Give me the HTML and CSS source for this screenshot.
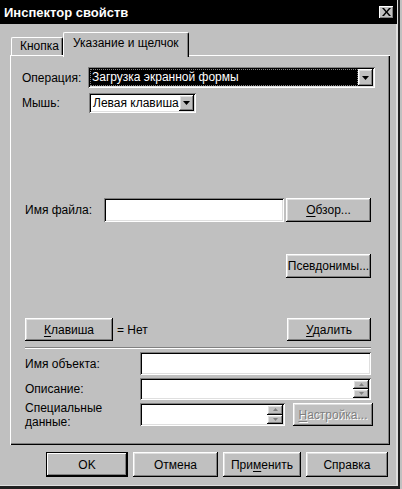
FILE: index.html
```html
<!DOCTYPE html>
<html lang="ru">
<head>
    <meta charset="UTF-8">
    <meta name="viewport" content="width=device-width, initial-scale=1.0">
    <title>Инспектор свойств</title>
    <link rel="stylesheet" href="styles.css">
</head>
<body>
    <div class="window">
        <div class="titlebar">
            <span class="title">Инспектор свойств</span>
            <button class="close-btn" type="button">
                <svg width="9" height="8" viewBox="0 0 9 8"><path d="M0 0h2l2.5 3 2.5-3h2L5.5 4 9 8H7L4.5 5 2 8H0l3.5-4z" fill="#000"/></svg>
            </button>
        </div>

        <div class="tabs">
            <div class="tab">Кнопка</div>
            <div class="tab active">Указание и щелчок</div>
        </div>

        <div class="panel">
            <div class="row row-op">
                <label class="lbl lbl-op">Операция:</label>
                <div class="field combo combo-op">
                    <span class="combo-value selected">Загрузка экранной формы</span>
                    <span class="btn combo-btn"><svg width="7" height="4" viewBox="0 0 7 4"><path d="M0 0h7L3.5 4z" fill="#000"/></svg></span>
                </div>
            </div>
            <div class="row row-mouse">
                <label class="lbl lbl-mouse">Мышь:</label>
                <div class="field combo combo-mouse">
                    <span class="combo-value">Левая клавиша</span>
                    <span class="btn combo-btn"><svg width="7" height="4" viewBox="0 0 7 4"><path d="M0 0h7L3.5 4z" fill="#000"/></svg></span>
                </div>
            </div>

            <div class="row row-file">
                <label class="lbl lbl-file">Имя файла:</label>
                <div class="field input-file"></div>
                <button class="btn btn-side" type="button"><u>О</u>бзор...</button>
            </div>
            <div class="row row-alias">
                <button class="btn btn-side" type="button">Псевдонимы...</button>
            </div>

            <div class="row row-key">
                <button class="btn btn-key" type="button"><u>К</u>лавиша</button>
                <span class="key-value">= Нет</span>
                <button class="btn btn-del" type="button"><u>У</u>далить</button>
            </div>
            <div class="separator"></div>

            <div class="row row-prop">
                <label class="lbl lbl-prop">Имя объекта:</label>
                <div class="field grow"></div>
            </div>
            <div class="row row-prop row-desc">
                <label class="lbl lbl-prop">Описание:</label>
                <div class="field grow spin-field">
                    <span class="spinner">
                        <span class="btn spin-btn"><svg width="5" height="3" viewBox="0 0 5 3"><path d="M0 3h5L2.5 0z" fill="#808080"/></svg></span>
                        <span class="btn spin-btn"><svg width="5" height="3" viewBox="0 0 5 3"><path d="M0 0h5L2.5 3z" fill="#808080"/></svg></span>
                    </span>
                </div>
            </div>
            <div class="row row-prop">
                <label class="lbl lbl-prop lbl-two">Специальные<br>данные:</label>
                <div class="field spin-field input-special">
                    <span class="spinner">
                        <span class="btn spin-btn"><svg width="5" height="3" viewBox="0 0 5 3"><path d="M0 3h5L2.5 0z" fill="#808080"/></svg></span>
                        <span class="btn spin-btn"><svg width="5" height="3" viewBox="0 0 5 3"><path d="M0 0h5L2.5 3z" fill="#808080"/></svg></span>
                    </span>
                </div>
                <button class="btn btn-setup" type="button" disabled><u>Н</u>астройка...</button>
            </div>
        </div>

        <div class="footer">
            <button class="btn btn-default" type="button">OK</button>
            <button class="btn btn-cancel" type="button">Отмена</button>
            <button class="btn btn-apply" type="button">При<u>м</u>енить</button>
            <button class="btn btn-help" type="button">Справка</button>
        </div>
    </div>
</body>
</html>
```

FILE: styles.css
```css
* {
    box-sizing: border-box;
}

body {
    margin: 0;
    background-color: #c0c0c0;
    font-family: 'Liberation Sans', Arial, sans-serif;
    font-size: 12px;
    color: #000;
}

.window {
    width: 400px;
    height: 489px;
    background-color: #c0c0c0;
    box-shadow: inset -2px -3px #202020, inset -4px -4px #dfdfdf;
}

/* Title bar */
.titlebar {
    height: 24px;
    width: 397px;
    background-color: #000;
    display: flex;
    align-items: center;
    justify-content: space-between;
    padding: 0 3px 0 4px;
}

.title {
    color: #fff;
    font-weight: bold;
    font-size: 13px;
}

.close-btn {
    width: 15px;
    height: 13px;
    padding: 0;
    border: none;
    background-color: #c0c0c0;
    display: flex;
    align-items: center;
    justify-content: center;
    box-shadow: inset -1px -1px #000, inset 1px 1px #fff, inset -2px -2px #808080;
}

/* Tabs */
.tabs {
    display: flex;
    align-items: flex-end;
    height: 25px;
    margin: 8px 0 -2px 11px;
    position: relative;
    z-index: 1;
}

.tab {
    height: 18px;
    width: 52px;
    margin-bottom: 2px;
    padding-left: 8px;
    line-height: 17px;
    background-color: #c0c0c0;
    border: 1px solid;
    border-color: #fff #000 transparent #fff;
    border-bottom: none;
    border-radius: 2px 2px 0 0;
    box-shadow: inset -1px 0 #808080;
}

.tab.active {
    height: 25px;
    width: 126px;
    margin-bottom: 0;
    padding-left: 9px;
    line-height: 20px;
}

/* Panel */
.panel {
    margin-left: 10px;
    width: 380px;
    height: 390px;
    padding: 12px 19px 0 15px;
    box-shadow: inset 1px 1px #fff, inset -1px -1px #000, inset -2px -2px #808080;
}

.row {
    display: flex;
    align-items: center;
}

.lbl {
    flex-shrink: 0;
}

/* Shared controls */
.btn {
    background-color: #c0c0c0;
    border: none;
    padding: 0;
    font: inherit;
    color: #000;
    box-shadow: inset -1px -1px #000, inset 1px 1px #fff, inset -2px -2px #808080, inset 2px 2px #dfdfdf;
}

.btn u {
    text-decoration-thickness: 1px;
    text-underline-offset: 2px;
}

.btn:disabled {
    color: #808080;
    text-shadow: 1px 1px #fff;
}

.field {
    background-color: #fff;
    height: 100%;
    box-shadow: inset 1px 1px #808080, inset -1px -1px #fff, inset 2px 2px #000, inset -2px -2px #dfdfdf;
}

.grow {
    flex: 1;
}

/* Combo boxes */
.combo {
    display: flex;
    padding: 2px;
}

.combo-value {
    flex: 1;
    padding-left: 2px;
    line-height: 16px;
    white-space: nowrap;
    overflow: hidden;
}

.combo-value.selected {
    background-color: #000;
    color: #fff;
    outline: 1px dotted #808080;
    outline-offset: -1px;
}

.combo-btn {
    width: 15px;
    display: flex;
    align-items: center;
    justify-content: center;
}

.row-op {
    height: 21px;
    margin: 0 -4px 0 -3px;
}

.lbl-op {
    width: 66px;
}

.combo-op {
    flex: 1;
}

.row-mouse {
    height: 20px;
    margin: 5px 0 0 -3px;
}

.lbl-mouse {
    width: 67px;
}

.combo-mouse {
    width: 107px;
}

/* File row */
.row-file {
    height: 24px;
    margin-top: 85px;
}

.lbl-file {
    width: 79px;
}

.input-file {
    width: 180px;
}

.btn-side {
    width: 85px;
    height: 24px;
    margin-left: 2px;
}

.row-alias {
    height: 24px;
    margin-top: 32px;
    justify-content: flex-end;
}

/* Key row */
.row-key {
    height: 23px;
    margin-top: 40px;
}

.btn-key {
    width: 88px;
    height: 23px;
}

.key-value {
    margin-left: 4px;
}

.btn-del {
    width: 84px;
    height: 23px;
    margin-left: auto;
}

.separator {
    margin-top: 6px;
    height: 2px;
    border-top: 1px solid #808080;
    border-bottom: 1px solid #fff;
}

/* Property rows */
.row-prop {
    height: 23px;
    margin-top: 3px;
}

.row-prop:first-of-type {
    margin-top: 4px;
}

.row-desc {
    height: 22px;
}

.lbl-prop {
    width: 115px;
}

.lbl-two {
    line-height: 14px;
}

.spin-field {
    display: flex;
    justify-content: flex-end;
    padding: 2px;
}

.spinner {
    width: 16px;
    display: flex;
    flex-direction: column;
}

.spin-btn {
    flex: 1;
    display: flex;
    align-items: center;
    justify-content: center;
}

.input-special {
    width: 145px;
}

.btn-setup {
    width: 80px;
    height: 23px;
    margin: 0 -2px 0 8px;
}

/* Footer buttons */
.footer {
    display: flex;
    justify-content: flex-end;
    gap: 5px;
    margin-top: 7px;
    padding-right: 12px;
}

.footer .btn {
    height: 25px;
}

.btn-default {
    width: 82px;
    box-shadow: inset 0 0 0 1px #000, inset -2px -2px #000, inset 2px 2px #fff, inset -3px -3px #808080;
}

.btn-cancel {
    width: 85px;
}

.btn-apply {
    width: 78px;
}

.btn-help {
    width: 82px;
}
```
